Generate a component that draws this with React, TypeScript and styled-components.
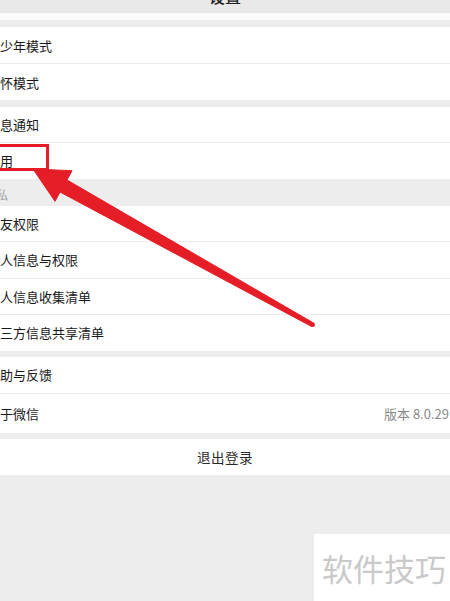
import React from "react";
import styled, { createGlobalStyle } from "styled-components";

const Global = createGlobalStyle`
  html, body { margin: 0; padding: 0; background: #ededed; }
  body { font-family: "Noto Sans CJK SC", "Noto Sans", sans-serif; overflow: hidden; }
  #root { width: 450px; height: 601px; overflow: hidden; }
`;

const Page = styled.div`
  position: relative;
  width: 450px;
  height: 601px;
  overflow: hidden;
  background: #ededed;
  display: flex;
  flex-direction: column;
`;

const Header = styled.header`
  height: 13px;
  background: #e9e9e9;
  display: flex;
  align-items: flex-end;
  justify-content: center;
  overflow: visible;
`;

const Title = styled.h1`
  margin: 0 0 9px;
  font-size: 16px;
  line-height: 1;
  font-weight: 500;
  color: #1f1f1f;
`;

const Strip = styled.div`
  height: 7px;
  background: #fbfbfb;
`;

const Group = styled.section<{ $gap?: number }>`
  margin-top: ${(p) => (p.$gap ?? 7)}px;
  background: #ffffff;
  display: flex;
  flex-direction: column;
`;

const Row = styled.div<{ $h?: number }>`
  height: ${(p) => p.$h ?? 35.5}px;
  display: flex;
  align-items: center;
  justify-content: space-between;
  font-size: 13px;
  color: #181818;
  & + & { border-top: 1px solid #ebebeb; }
`;

const Label = styled.span`
  white-space: nowrap;
`;

const Value = styled.span`
  font-size: 13px;
  color: #8a8a8a;
  padding-right: 1px;
`;

const SectionLabel = styled.div`
  height: 27px;
  display: flex;
  align-items: flex-end;
  padding-bottom: 3px;
  box-sizing: border-box;
  font-size: 12px;
  color: #a3a3a3;
  & > span { margin-left: -4px; }
`;

const Logout = styled.div`
  margin-top: 6.5px;
  height: 36px;
  background: #ffffff;
  display: flex;
  align-items: center;
  justify-content: center;
  font-size: 13.5px;
  color: #2a2a2a;
  letter-spacing: 0.5px;
`;

const HighlightBox = styled.div`
  position: absolute;
  left: -10px;
  top: 143.5px;
  width: 58.5px;
  height: 27px;
  box-sizing: border-box;
  border: 3px solid #e51d26;
`;

const ArrowLayer = styled.svg`
  position: absolute;
  left: 0;
  top: 0;
  pointer-events: none;
`;

const Watermark = styled.div`
  position: absolute;
  right: 0;
  bottom: 0;
  width: 136px;
  height: 67px;
  background: #ffffff;
  display: flex;
  align-items: center;
  padding-left: 8px;
  box-sizing: border-box;
  font-size: 31px;
  color: #c9c9c9;
  white-space: nowrap;
`;

export default function App() {
  return (
    <>
      <Global />
      <Page>
        <Header>
          <Title>设置</Title>
        </Header>
        <Strip />
        <Group>
          <Row $h={36}><Label>少年模式</Label></Row>
          <Row $h={36}><Label>怀模式</Label></Row>
        </Group>
        <Group>
          <Row $h={35}><Label>息通知</Label></Row>
          <Row $h={35.5}><Label>用</Label></Row>
        </Group>
        <SectionLabel><span>私</span></SectionLabel>
        <Group $gap={0}>
          <Row><Label>友权限</Label></Row>
          <Row><Label>人信息与权限</Label></Row>
          <Row><Label>人信息收集清单</Label></Row>
          <Row><Label>三方信息共享清单</Label></Row>
        </Group>
        <Group $gap={6}>
          <Row $h={36}><Label>助与反馈</Label></Row>
          <Row $h={39}>
            <Label>于微信</Label>
            <Value>版本 8.0.29</Value>
          </Row>
        </Group>
        <Logout>退出登录</Logout>

        <HighlightBox />
        <ArrowLayer width="450" height="601" viewBox="0 0 450 601">
          <polygon
            points="33,169 72,170.7 67,180 314,323.3 312,326.7 60,192 55,201.3"
            fill="#e51d26"
            stroke="#e51d26"
            strokeWidth="1"
            strokeLinejoin="round"
          />
          <circle cx="313" cy="325" r="2" fill="#e51d26" />
        </ArrowLayer>
        <Watermark>软件技巧</Watermark>
      </Page>
    </>
  );
}
